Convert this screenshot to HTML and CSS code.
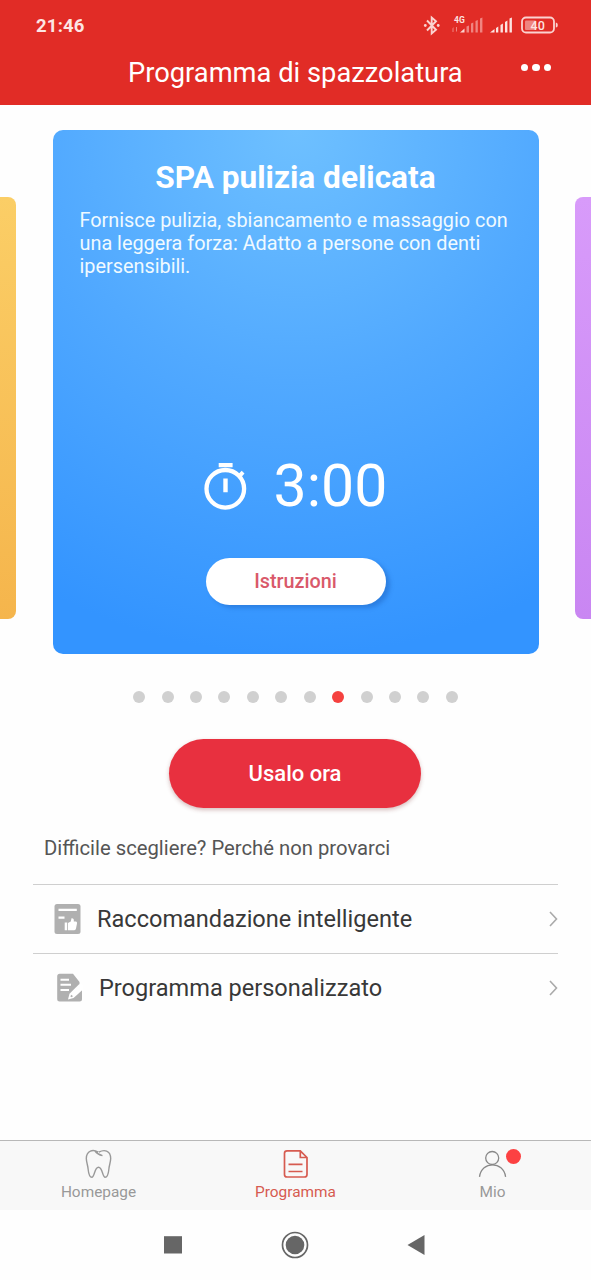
FILE: index.html
```html
<!DOCTYPE html>
<html lang="it">
<head>
<meta charset="utf-8">
<title>Programma di spazzolatura</title>
<link rel="stylesheet" href="styles.css">
</head>
<body>
<header class="header">
  <div class="status">
    <span class="clock">21:46</span>
    <svg class="status-icons" width="138" height="24" viewBox="422 14 138 24">
      <g fill="none" stroke="#fbd3d0" stroke-width="1.900">
        <path d="M427 20.500 436 29.800 431.700 33.500V17.500L436 21.200 427 30.500"/>
      </g>
      <g fill="#fbd3d0"><circle cx="425.300" cy="25.500" r="1.400"/><circle cx="438.200" cy="25.500" r="1.400"/></g>
      <text class="net" x="454" y="22.500">4G</text>
      <g fill="#f08480">
        <path d="M452.500 28.500 453.500 27V32H452.500zM456 27h1v5l-1-1z"/>
        <path fill="#fbd3d0" d="M460 32.500 464.500 28.500V32.500z"/>
        <path d="M466.500 26.500 469 25.500V32.500H466.500zM471 23.500 473.300 22.500V32.500H471zM475.500 21 477.800 20V32.500H475.500zM480 18.500 482.400 17.500V32.500H480z"/>
      </g>
      <path fill="#fde3e1" d="M490 32.500 494.500 29V32.500zM496 28 498.300 26.500V32.500H496zM500.500 25 502.900 23.500V32.500H500.500zM505 22 507.400 20.500V32.500H505zM509.500 18.500 511.900 17.500V32.500H509.500z"/>
      <rect x="522" y="17.500" width="32" height="15" rx="4" fill="none" stroke="#fbd3d0" stroke-width="1.800"/>
      <rect x="525" y="20.500" width="11" height="9.500" rx="1" fill="#ee8580"/>
      <path fill="#fbd3d0" d="M555.800 22.500q2 0 2 2.500t-2 2.500z"/>
      <text class="battery" x="530.600" y="30">40</text>
    </svg>
  </div>
  <div class="titlebar">
    <h1 class="title">Programma di spazzolatura</h1>
    <div class="more"><i></i><i></i><i></i></div>
  </div>
</header>

<main class="main">
  <section class="carousel">
    <div class="peek peek-left"></div>
    <article class="card">
      <h2 class="card-title">SPA pulizia delicata</h2>
      <p class="card-text">Fornisce pulizia, sbiancamento e massaggio con<br>una leggera forza: Adatto a persone con denti<br>ipersensibili.</p>
      <div class="timer">
        <svg width="44" height="48" viewBox="0 0 44 48">
          <circle cx="21.300" cy="26.800" r="18.800" fill="none" stroke="#fff" stroke-width="4.300"/>
          <path fill="#fff" d="M14.700 1H28.600V5.200H14.700zM19.300 16.500H23.700V30.200H19.300zM34 12.500 37.700 8.800 40.500 11.600 37 15.500z"/>
        </svg>
        <span class="time">3:00</span>
      </div>
      <button class="info">Istruzioni</button>
    </article>
    <div class="peek peek-right"></div>
  </section>

  <div class="dots"><i></i><i></i><i></i><i></i><i></i><i></i><i></i><i class="on"></i><i></i><i></i><i></i><i></i></div>

  <button class="use">Usalo ora</button>

  <section class="options">
    <p class="hint">Difficile scegliere? Perché non provarci</p>
    <a class="option">
      <svg class="option-icon" width="28" height="32" viewBox="0 0 28 32">
        <rect x="1.500" y="1" width="26" height="30" rx="2.500" fill="#b0b0b0"/>
        <path fill="#fff" d="M5.500 5.800H23.800V8H5.500zM5.500 13.500H11.500V15.700H5.500zM11.700 19.500H14.200V27.200H11.700zM15 20 17.800 18.500 18.500 15.300Q21.200 15 20.800 18.500H22.900Q24.300 18.700 24 20.500L23 25.600Q22.700 27.200 21.300 27.200H15z"/>
      </svg>
      <span class="option-label label-smart">Raccomandazione intelligente</span>
      <svg class="chevron" width="9" height="16" viewBox="0 0 9 16"><path d="M1 1 7.500 8 1 15" fill="none" stroke="#aaa" stroke-width="1.600"/></svg>
    </a>
    <a class="option">
      <svg class="option-icon" width="30" height="32" viewBox="0 0 30 32">
        <path fill="#b0b0b0" d="M6.700 1.800H20L26.500 10V13L29 16.500V27Q29 29.500 26.500 29.500H6.700Q4.200 29.500 4.200 27V4.300Q4.200 1.800 6.700 1.800z"/>
        <path fill="#fff" d="M7.500 6.800H16V8.800H7.500zM7.500 11.800H18V13.800H7.500zM7.500 17H16V19H7.500z"/>
        <path fill="#fff" d="M30 13.500V17.500L20.500 26 15 27.500 16.500 21.800 25.800 12.500 28.500 11.500z"/>
        <path fill="#b0b0b0" d="M18.500 22.800 20 24.300 18.300 25.300 17.300 24.300z"/>
      </svg>
      <span class="option-label label-custom">Programma personalizzato</span>
      <svg class="chevron" width="9" height="16" viewBox="0 0 9 16"><path d="M1 1 7.500 8 1 15" fill="none" stroke="#aaa" stroke-width="1.600"/></svg>
    </a>
  </section>
</main>

<nav class="tabs">
  <a class="tab">
    <svg width="30" height="32" viewBox="0 0 30 32"><path d="M14.300 4C9 1.300 2.500 2 2.300 10.500 2.500 15 3.800 17 4.100 21 4.500 25 5.500 29.300 7.900 29.300 10.600 29.300 10.400 19.300 14.500 19.300 18.600 19.300 18.400 29.300 21.100 29.300 23.500 29.300 24.500 25 24.900 21 25.200 17 26.500 15 26.700 10.500 26.500 2 20 1.300 14.800 4.200M11 3Q13.500 6.500 18.500 7.600" fill="none" stroke="#999" stroke-width="1.400"/></svg>
    <span class="tab-label">Homepage</span>
  </a>
  <a class="tab active">
    <svg width="30" height="32" viewBox="0 0 30 32"><path d="M19.300 2.800H6Q3.500 2.800 3.500 5.300V26.500Q3.500 29 6 29H23.500Q26 29 26 26.500V9.500zM19.300 2.800V9.500H26M7.500 16.300H21.500M7.500 23.500H21.500" fill="none" stroke="#d65b50" stroke-width="1.700"/></svg>
    <span class="tab-label">Programma</span>
  </a>
  <a class="tab">
    <svg width="30" height="32" viewBox="0 0 30 32"><circle cx="14.200" cy="10" r="6.500" fill="none" stroke="#888" stroke-width="1.300"/><path d="M1.500 28.800C3.500 12.800 25.500 12.800 27.600 28.800" fill="none" stroke="#888" stroke-width="1.300"/></svg>
    <span class="tab-label">Mio</span>
    <i class="badge"></i>
  </a>
</nav>

<footer class="sysnav">
  <svg width="28" height="28" viewBox="0 0 28 28"><path fill="#666" d="M5 5.200H23V22.500H5z"/></svg>
  <svg width="28" height="28" viewBox="0 0 28 28"><circle cx="14" cy="14" r="12.500" fill="none" stroke="#666" stroke-width="1.700"/><circle cx="14" cy="14" r="9.300" fill="#666"/></svg>
  <svg width="28" height="28" viewBox="0 0 28 28"><path fill="#666" d="M4.500 14 21.500 4V24z"/></svg>
</footer>
</body>
</html>
```

FILE: styles.css
```css
* { box-sizing: border-box; }
body {
  margin: 0;
  width: 591px;
  height: 1280px;
  overflow: hidden;
  display: flex;
  flex-direction: column;
  background: #fefefe;
  font-family: Roboto, "Noto Sans", sans-serif;
}
h1, h2, p { margin: 0; }
button { border: 0; font-family: inherit; padding: 0; }

.header { height: 105px; background: #e12c26; color: #fff; }
.status { height: 52px; display: flex; justify-content: space-between; align-items: center; padding: 0 31px 0 36px; }
.clock { font-size: 18.500px; font-weight: 700; color: #fde6e4; letter-spacing: 0.200px; }
.net { font-size: 8.500px; font-weight: 700; fill: #fde3e1; }
.battery { font-size: 12.500px; font-weight: 500; fill: #fde3e1; }
.titlebar { height: 41px; display: flex; align-items: center; justify-content: space-between; padding: 0 40px 0 128px; }
.title { font-size: 27.300px; font-weight: 400; white-space: nowrap; }
.more { display: flex; gap: 4px; padding-bottom: 10px; }
.more i { width: 7.500px; height: 7.500px; border-radius: 50%; background: #fff; }

.main { flex: 1; display: flex; flex-direction: column; align-items: center; }
.carousel { width: 591px; display: flex; justify-content: space-between; margin-top: 25px; }
.peek { width: 16px; height: 422px; margin-top: 67px; }
.peek-left { background: linear-gradient(#fbce66, #f5b54c); border-radius: 0 8px 8px 0; }
.peek-right { background: linear-gradient(#d89bfa, #c986f2); border-radius: 8px 0 0 8px; }
.card {
  width: 486px;
  height: 524px;
  border-radius: 10px;
  background: radial-gradient(circle 525px at 50% 0, #6ec0ff 0%, #51a9ff 48%, #3394ff 100%);
  color: #fff;
  display: flex;
  flex-direction: column;
  align-items: center;
}
.card-title { margin-top: 28px; font-size: 31.600px; line-height: 40px; font-weight: 700; white-space: nowrap; }
.card-text { align-self: flex-start; margin: 11px 0 0 27px; font-size: 19.850px; line-height: 23px; white-space: nowrap; color: #f0faff; }
.timer { height: 70px; margin-top: 173px; display: flex; align-items: center; gap: 26px; }
.time { font-size: 59px; line-height: 70px; }
.info {
  width: 180px;
  height: 47px;
  margin-top: 37px;
  border-radius: 24px;
  background: #fff;
  color: #d9596a;
  font-size: 19.800px;
  font-weight: 500;
  box-shadow: 4px 3px 4px rgba(20, 80, 170, 0.350);
}

.dots { display: flex; gap: 16.450px; margin-top: 37px; }
.dots i { width: 12px; height: 12px; border-radius: 50%; background: #d0d0d0; }
.dots .on { background: #f5413f; }

.use {
  width: 252px;
  height: 69px;
  margin: 36px 1px 0 0;
  border-radius: 35px;
  background: #e8303f;
  color: #fff;
  font-size: 22px;
  font-weight: 500;
  box-shadow: 0 2px 4px rgba(120, 40, 40, 0.300);
}

.options { width: 525px; margin-top: 28px; }
.hint { margin: 0 0 24px 11px; font-size: 20.250px; line-height: 24px; color: #555; white-space: nowrap; }
.option { display: flex; align-items: center; height: 69px; border-top: 1px solid #cfcfcf; padding-left: 20px; }
.option-label { flex: 1; font-size: 23.550px; color: #383838; white-space: nowrap; }
.label-smart { margin-left: 16px; }
.label-custom { margin-left: 16px; }

.tabs { height: 70px; display: grid; grid-template-columns: repeat(3, 1fr); background: #f8f8f8; border-top: 1px solid #b8b8b8; }
.tab { display: flex; flex-direction: column; align-items: center; padding-top: 7px; position: relative; color: #999; }
.tab-label { font-size: 15.400px; line-height: 20px; margin-top: 2px; }
.active { color: #d65b50; }
.badge { position: absolute; top: 8px; left: 112px; width: 15px; height: 15px; border-radius: 50%; background: #fc4142; }

.sysnav { height: 70px; display: flex; justify-content: center; align-items: center; gap: 94px; padding-right: 2px; }
```
